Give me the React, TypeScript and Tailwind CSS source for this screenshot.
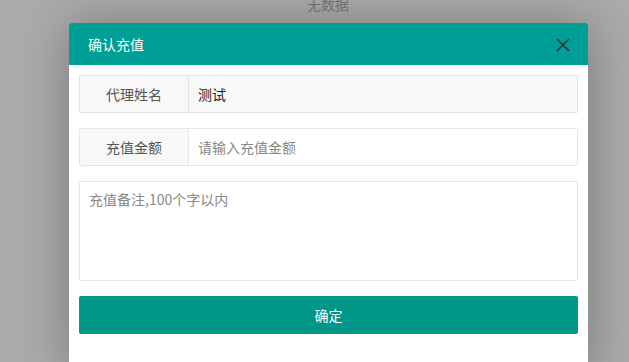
import React from "react";

const font = { fontFamily: '"Microsoft YaHei", "Noto Sans CJK SC", "Noto Sans", sans-serif' };

export default function App() {
  return (
    <div
      className="relative h-[362px] w-[629px] overflow-hidden bg-[#ababab]"
      style={font}
    >
      <div className="flex justify-center pl-[27px]">
        <span className="-mt-[6px] text-[14px] leading-[20px] text-[#777]">无数据</span>
      </div>

      <div className="absolute left-[69px] top-[23px] w-[519px] bg-white shadow-[1px_1px_50px_rgba(0,0,0,0.3)] rounded-t-[2px]">
        <div className="flex h-[42px] items-center justify-between rounded-t-[2px] bg-[#009f95] pl-[19px] pr-[18px]">
          <span className="text-[14px] text-white">确认充值</span>
          <svg width="14" height="14" viewBox="0 0 14 14" className="mt-[2px]">
            <path d="M1 1L13 13M13 1L1 13" stroke="#2f3540" strokeWidth="1.6" />
          </svg>
        </div>

        <div className="flex flex-col gap-[15px] px-[10px] pb-[40px] pt-[10px] text-[14px]">
          <div className="flex h-[38px] rounded-[2px] border border-[#e2e2e2] bg-[#f8f8f8]">
            <div className="flex w-[109px] items-center justify-center border-r border-[#e2e2e2] text-[#555]">
              代理姓名
            </div>
            <div className="flex flex-1 items-center pl-[9px] text-[#222]">测试</div>
          </div>

          <div className="flex h-[38px] rounded-[2px] border border-[#e6e6e6] bg-white">
            <div className="flex w-[109px] items-center justify-center border-r border-[#e6e6e6] bg-[#f8f8f8] text-[#555]">
              充值金额
            </div>
            <div className="flex flex-1 items-center pl-[9px] text-[#888]">请输入充值金额</div>
          </div>

          <div className="h-[100px] rounded-[2px] border border-[#e6e6e6] bg-white px-[9px] pt-[7px] leading-[20px] text-[#888]">
            充值备注,100个字以内
          </div>

          <div className="flex h-[38px] items-center justify-center rounded-[2px] bg-[#009688] text-white">
            确定
          </div>
        </div>
      </div>
    </div>
  );
}
